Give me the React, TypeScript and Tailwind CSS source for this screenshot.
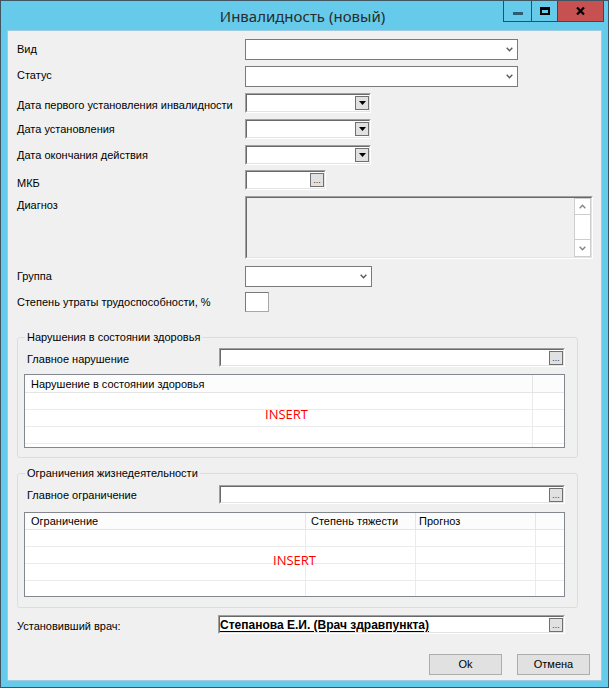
import { FC, ReactNode } from "react";

const Sunken: FC<{ className: string; fill?: string; children?: ReactNode }> = ({ className, fill = "bg-white", children }) => (
  <div className={`${className} border border-t-[#a0a0a0] border-l-[#a0a0a0] border-b-white border-r-white`}>
    <div className={`h-full w-full border border-t-[#696969] border-l-[#696969] border-b-[#e3e3e3] border-r-[#e3e3e3] flex items-center ${fill}`}>
      {children}
    </div>
  </div>
);

const Chevron: FC<{ up?: boolean; color?: string }> = ({ up, color = "#5a5a5a" }) => (
  <svg width="7" height="5" viewBox="0 0 7 5">
    <polyline
      points={up ? "0.7,4.2 3.5,1.2 6.3,4.2" : "0.7,0.8 3.5,3.8 6.3,0.8"}
      fill="none"
      stroke={color}
      strokeWidth="1.4"
    />
  </svg>
);

const Combo: FC<{ className: string }> = ({ className }) => (
  <div className={`${className} border border-[#7a7a7a] bg-white flex items-center justify-end pr-[4px]`}>
    <Chevron />
  </div>
);

const DropBtn = () => (
  <div className="ml-auto w-[14px] h-[14px] bg-[#e1e1e1] border border-[#707070] flex items-center justify-center">
    <svg width="7" height="4" viewBox="0 0 7 4">
      <path d="M0 0H7L3.5 4Z" fill="#000" />
    </svg>
  </div>
);

const DotsBtn = () => (
  <div className="ml-auto w-[14px] h-[14px] bg-[#e1e1e1] border border-[#707070] flex items-end justify-center pb-[1px] text-[9px] leading-[9px] text-[#333] font-['Liberation_Sans',sans-serif]">
    ...
  </div>
);

const Label: FC<{ className: string; children: ReactNode }> = ({ className, children }) => (
  <div className={`${className} text-[11px] leading-[13px] text-black shrink-0`}>{children}</div>
);

const App: FC = () => {
  const rows = [0, 1, 2, 3];
  return (
    <div className="w-[609px] h-[688px] bg-[#66cbea] border border-[#3f5561] flex flex-col font-['Liberation_Sans',Arial,sans-serif] text-black">
      {/* title bar */}
      <div className="h-[29px] flex shrink-0">
        <div className="flex-1" />
        <div className="self-center text-[15px] leading-[20px] text-[#2a2a2a] font-['Noto_Sans',sans-serif]">Инвалидность (новый)</div>
        <div className="flex-1 flex justify-end items-start pr-[4px]">
          <div className="flex h-[21px] border-b border-r border-[#3b4a52]">
            <div className="w-[28px] border-l border-[#3b4a52] flex justify-center">
              <div className="mt-[11px] w-[10px] h-[3px] bg-[#2c5d72]" />
            </div>
            <div className="w-[26px] border-l border-[#3b4a52] flex justify-center">
              <div className="mt-[6px] w-[10px] h-[8px] border-2 border-t-[3px] border-black" />
            </div>
            <div className="w-[46px] border-l border-[#3b4a52] bg-[#c75050] flex justify-center">
              <svg className="mt-[6px]" width="9" height="8" viewBox="0 0 9 8">
                <path d="M1 0.5L8 7.5M8 0.5L1 7.5" stroke="#000" strokeWidth="2.2" />
              </svg>
            </div>
          </div>
        </div>
      </div>

      {/* client */}
      <div className="mx-[6px] h-[651px] bg-[#f0f0f0] border border-[#9fcbe0] flex flex-col pt-[8px] pl-[9px]">
        <div className="flex h-[21px]">
          <Label className="w-[228px] mt-[4px]">Вид</Label>
          <Combo className="w-[273px] h-[21px]" />
        </div>
        <div className="flex h-[21px] mt-[6px]">
          <Label className="w-[228px] mt-[3px]">Статус</Label>
          <Combo className="w-[273px] h-[21px]" />
        </div>
        <div className="flex h-[20px] mt-[6px]">
          <Label className="w-[228px] mt-[6px]">Дата первого установления инвалидности</Label>
          <Sunken className="w-[126px] h-[20px]"><DropBtn /></Sunken>
        </div>
        <div className="flex h-[20px] mt-[6px]">
          <Label className="w-[228px] mt-[4px]">Дата установления</Label>
          <Sunken className="w-[126px] h-[20px]"><DropBtn /></Sunken>
        </div>
        <div className="flex h-[20px] mt-[6px]">
          <Label className="w-[228px] mt-[4px]">Дата окончания действия</Label>
          <Sunken className="w-[126px] h-[20px]"><DropBtn /></Sunken>
        </div>
        <div className="flex h-[20px] mt-[5px]">
          <Label className="w-[228px] mt-[7px]">МКБ</Label>
          <Sunken className="w-[81px] h-[20px]"><DotsBtn /></Sunken>
        </div>
        <div className="flex h-[63px] mt-[6px]">
          <Label className="w-[228px] mt-[3px]">Диагноз</Label>
          <Sunken className="w-[348px] h-[63px]" fill="bg-[#f0f0f0]">
            <div className="ml-auto self-stretch w-[17px] bg-white border border-[#cdcdcd] flex flex-col">
              <div className="h-[16px] border-b border-[#cdcdcd] flex items-center justify-center">
                <Chevron up color="#858585" />
              </div>
              <div className="flex-1" />
              <div className="h-[17px] border-t border-[#cdcdcd] flex items-center justify-center">
                <Chevron color="#858585" />
              </div>
            </div>
          </Sunken>
        </div>
        <div className="flex h-[21px] mt-[7px]">
          <Label className="w-[228px] mt-[4px]">Группа</Label>
          <Combo className="w-[127px] h-[21px]" />
        </div>
        <div className="flex h-[20px] mt-[5px]">
          <Label className="w-[228px] mt-[4px]">Степень утраты трудоспособности, %</Label>
          <div className="w-[24px] h-[20px] bg-white border border-[#7a7a7a] border-b-[#a8a8a8] border-r-[#a8a8a8]" />
        </div>

        {/* group 1 */}
        <fieldset className="w-[561px] mt-[18px] border border-[#d5dfe5] rounded-[3px] pb-[9px]">
          <legend className="ml-[7px] px-[2px] text-[11px] leading-[14px]">Нарушения в состоянии здоровья</legend>
          <div className="flex mt-[4px] pl-[9px]">
            <Label className="w-[192px] mt-[5px]">Главное нарушение</Label>
            <Sunken className="w-[346px] h-[19px]"><DotsBtn /></Sunken>
          </div>
          <div className="ml-[6px] mt-[7px] w-[541px] h-[74px] border border-[#828790] bg-white relative overflow-hidden">
            <div className="flex h-[18px] bg-[#fcfcfc] border-b border-[#e5e5e5]">
              <div className="w-[508px] border-r border-[#e5e5e5] pl-[6px] pt-[1px] text-[11px] leading-[16px]">Нарушение в состоянии здоровья</div>
              <div className="flex-1" />
            </div>
            {rows.map((i) => (
              <div key={i} className="flex h-[17px] border-b border-[#ebebeb]">
                <div className="w-[508px] border-r border-[#ebebeb]" />
                <div className="flex-1" />
              </div>
            ))}
            <div className="absolute left-[240px] top-[31px] text-[13px] leading-[16px] text-[#ff0000] font-['Open_Sans',sans-serif]">INSERT</div>
          </div>
        </fieldset>

        {/* group 2 */}
        <fieldset className="w-[561px] mt-[8px] border border-[#d5dfe5] rounded-[3px] pb-[10px]">
          <legend className="ml-[7px] px-[2px] text-[11px] leading-[14px]">Ограничения жизнедеятельности</legend>
          <div className="flex mt-[5px] pl-[9px]">
            <Label className="w-[192px] mt-[4px]">Главное ограничение</Label>
            <Sunken className="w-[346px] h-[19px]"><DotsBtn /></Sunken>
          </div>
          <div className="ml-[6px] mt-[8px] w-[541px] h-[85px] border border-[#828790] bg-white relative overflow-hidden">
            <div className="flex h-[17px] bg-[#fcfcfc] border-b border-[#e5e5e5] text-[11px] leading-[16px]">
              <div className="w-[281px] border-r border-[#e5e5e5] pl-[6px]">Ограничение</div>
              <div className="w-[110px] border-r border-[#e5e5e5] pl-[5px]">Степень тяжести</div>
              <div className="w-[120px] border-r border-[#e5e5e5] pl-[3px]">Прогноз</div>
              <div className="flex-1" />
            </div>
            {rows.map((i) => (
              <div key={i} className="flex h-[17px] border-b border-[#ebebeb]">
                <div className="w-[281px] border-r border-[#ebebeb]" />
                <div className="w-[110px] border-r border-[#ebebeb]" />
                <div className="w-[120px] border-r border-[#ebebeb]" />
                <div className="flex-1" />
              </div>
            ))}
            <div className="absolute left-[248px] top-[39px] text-[13px] leading-[16px] text-[#ff0000] font-['Open_Sans',sans-serif]">INSERT</div>
          </div>
        </fieldset>

        <div className="flex h-[19px] mt-[7px]">
          <Label className="w-[201px] mt-[5px]">Установивший врач:</Label>
          <Sunken className="w-[347px] h-[19px]">
            <span className="text-[12px] leading-[14px] font-bold underline underline-offset-[2px]">Степанова Е.И. (Врач здравпункта)</span>
            <DotsBtn />
          </Sunken>
        </div>

        <div className="flex justify-end gap-[15px] pr-[11px] mt-[20px]">
          <button className="w-[73px] h-[21px] border border-[#adadad] bg-[#e1e1e1] text-[11px] leading-[13px]">Ok</button>
          <button className="w-[73px] h-[21px] border border-[#adadad] bg-[#e1e1e1] text-[11px] leading-[13px]">Отмена</button>
        </div>
      </div>
    </div>
  );
};

export default App;
